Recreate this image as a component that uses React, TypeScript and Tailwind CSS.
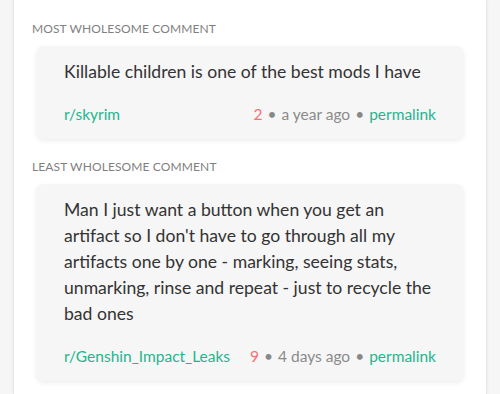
const comments = [
  {
    label: "Most wholesome comment",
    body: "Killable children is one of the best mods I have",
    sub: "r/skyrim",
    score: 2,
    when: "a year ago",
  },
  {
    label: "Least wholesome comment",
    body: "Man I just want a button when you get an artifact so I don't have to go through all my artifacts one by one - marking, seeing stats, unmarking, rinse and repeat - just to recycle the bad ones",
    sub: "r/Genshin_Impact_Leaks",
    score: 9,
    when: "4 days ago",
  },
];

export default function App() {
  return (
    <div className="h-[394px] overflow-hidden bg-[#f6f6f6] font-['Lato',sans-serif]">
      <div className="mx-[13px] min-h-[394px] border-x border-[#e6e6e6] bg-white px-[18px] pt-[21px] shadow-[0_0_4px_rgba(0,0,0,0.06)]">
        {comments.map((c) => (
          <div key={c.label} className="mb-[20px]">
            <p className="text-[12px] leading-[16px] uppercase tracking-[0.01em] text-[#7f7f7f]">{c.label}</p>
            <div className="mx-[4px] mt-[9px] rounded-lg bg-[#f6f6f6] px-[28px] pt-[13px] pb-[14px] shadow-[0_2px_5px_rgba(0,0,0,0.07)]">
              <p className="text-[17.6px] leading-[26px] text-[#333]">{c.body}</p>
              <div className="mt-[18px] flex items-center justify-between text-[15.5px] leading-[22px]">
                <a className="text-[#1fb58f]">{c.sub}</a>
                <div className="flex items-center gap-[5px]">
                  <span className="text-[#f07373]">{c.score}</span>
                  <span className="text-[#888]">•</span>
                  <span className="text-[#8a8a8a]">{c.when}</span>
                  <span className="text-[#888]">•</span>
                  <a className="text-[#1fb58f]">permalink</a>
                </div>
              </div>
            </div>
          </div>
        ))}
      </div>
    </div>
  );
}
